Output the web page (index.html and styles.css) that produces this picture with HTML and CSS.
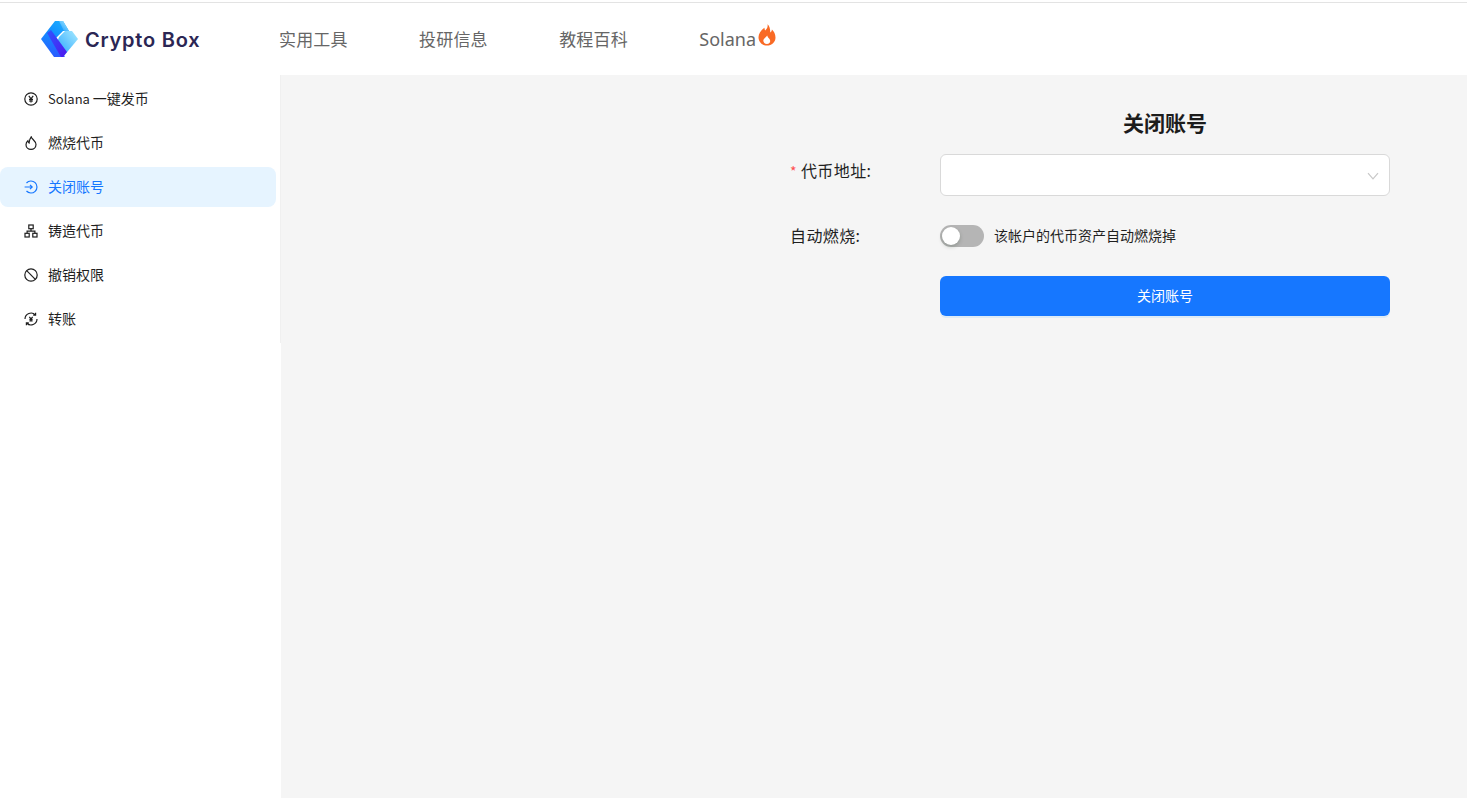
FILE: index.html
```html
<!DOCTYPE html>
<html lang="zh-CN">
<head>
<meta charset="utf-8">
<title>Crypto Box</title>
<link rel="stylesheet" href="styles.css">
</head>
<body>
<header class="topbar">
  <a class="brand">
    <svg class="brand-logo" viewBox="0 0 38 38" width="38" height="38">
      <defs>
        <linearGradient id="lgA" x1="0" y1="1" x2="1" y2="0"><stop offset="0" stop-color="#0a78ff"/><stop offset="1" stop-color="#1fb4ff"/></linearGradient>
        <linearGradient id="lgB" x1="0" y1="0" x2="1" y2="1"><stop offset="0" stop-color="#2f55ff"/><stop offset="1" stop-color="#4f16ee"/></linearGradient>
        <linearGradient id="lgC" x1="0" y1="1" x2="1" y2="0"><stop offset="0" stop-color="#1a9dff"/><stop offset="1" stop-color="#a6eaff"/></linearGradient>
        <linearGradient id="lgD" x1="0" y1="0" x2="0" y2="1"><stop offset="0" stop-color="#1689ff"/><stop offset="1" stop-color="#2a5cff"/></linearGradient>
      </defs>
      <path d="M0 19 14 1H22L28 11 22 11 12 21 6 14Z" fill="url(#lgA)"/>
      <path d="M18 1H22L28 11H23Z" fill="url(#lgC)"/>
      <path d="M18 17 24 11H31L37 19 22 37 14 28Z" fill="url(#lgC)"/>
      <path d="M0 19 6 13 24 37H13Z" fill="url(#lgD)"/>
      <path d="M6 13 10 10 26 32 22 37H20Z" fill="url(#lgB)"/>
    </svg>
    <span class="brand-name">Crypto Box</span>
  </a>
  <nav class="topnav">
    <a class="topnav-item">实用工具</a>
    <a class="topnav-item">投研信息</a>
    <a class="topnav-item">教程百科</a>
    <a class="topnav-item topnav-solana">Solana<svg class="fire" viewBox="0 0 18 22" width="18" height="22"><path d="M9.500 0.300c0.700 3.200-1 4.700-2.300 6.300-0.500-1-0.700-1.800-0.800-2.900C3 6.300 0.500 9.600 0.500 13.200c0 4.700 3.700 8.400 8.500 8.400s8.500-3.600 8.500-8.200c0-3.700-1.700-6.200-3.600-8-0.100 1.300-0.600 2.300-1.600 3.100C12.200 5.200 11.700 2.200 9.500 0.300zM9.200 11.500c0.300 1.700 1.400 2.400 2.300 3.500 0.800 1 1 2.700 0.100 3.800-0.700 0.800-1.600 1.200-2.700 1.200-2.100 0-3.600-1.500-3.600-3.400 0-2 2.900-3.300 3.900-5.100z" fill="#f96a25"/></svg></a>
  </nav>
</header>
<div class="layout">
  <aside class="sidebar">
    <ul class="menu">
      <li class="menu-item">
        <svg class="menu-icon" viewBox="0 0 14 14"><circle cx="7" cy="7" r="6.200"/><path d="M4.800 3.800 7 6.800l2.200-3M7 6.800v3.600M5 7.400h4M5 9h4"/></svg>
        <span><span class="menu-latin">Solana </span>一键发币</span>
      </li>
      <li class="menu-item">
        <svg class="menu-icon" viewBox="0 0 14 14"><path d="M7.200 0.900c0.500 2.200 4.800 3.900 4.800 7.700 0 2.800-2.200 4.800-5 4.800s-5-2-5-4.700c0-1.700 0.800-3.100 1.900-4 0.100 1 0.500 1.700 1.200 2.200C5.300 4.700 6 2.500 7.200 0.900z"/></svg>
        <span>燃烧代币</span>
      </li>
      <li class="menu-item is-active">
        <svg class="menu-icon" viewBox="0 0 14 14"><path d="M2.500 3A6 6 0 1 1 2.500 11M0.600 7h7.600M6 4.800 8.200 7 6 9.200"/></svg>
        <span>关闭账号</span>
      </li>
      <li class="menu-item">
        <svg class="menu-icon" viewBox="0 0 14 14"><rect x="4.800" y="1" width="4.400" height="3.700"/><rect x="1" y="9.300" width="4.200" height="3.700"/><rect x="8.800" y="9.300" width="4.200" height="3.700"/><path d="M7 4.700v2.400M3.100 9.300V7.100h7.800v2.200"/></svg>
        <span>铸造代币</span>
      </li>
      <li class="menu-item">
        <svg class="menu-icon" viewBox="0 0 14 14"><circle cx="7" cy="7" r="6.200"/><path d="M2.700 2.700l8.600 8.600"/></svg>
        <span>撤销权限</span>
      </li>
      <li class="menu-item">
        <svg class="menu-icon" viewBox="0 0 14 14"><path d="M1 7a6 6 0 0 1 10.400-4M13 7a6 6 0 0 1-10.400 4M11.600 0.800v2.400H9.200M2.400 13.200v-2.400h2.400M5.300 4.800 7 6.800l1.700-2M7 6.800v2.700M5.400 7.400h3.200M5.400 8.800h3.200"/></svg>
        <span>转账</span>
      </li>
    </ul>
  </aside>
  <main class="content">
    <form class="panel">
      <h1 class="panel-title">关闭账号</h1>
      <div class="row row-address">
        <label class="row-label"><span class="required">*</span>代币地址:</label>
        <div class="select">
          <svg class="select-arrow" viewBox="0 0 12 8" width="12" height="8"><path d="M1 1.200 6 6.800l5-5.600"/></svg>
        </div>
      </div>
      <div class="row row-switch">
        <label class="row-label">自动燃烧:</label>
        <div class="switch-wrap">
          <span class="switch"><span class="switch-knob"></span></span>
          <span class="switch-text">该帐户的代币资产自动燃烧掉</span>
        </div>
      </div>
      <div class="row">
        <span class="row-label"></span>
        <button type="button" class="submit">关闭账号</button>
      </div>
    </form>
  </main>
</div>
</body>
</html>
```
FILE: styles.css
```css
* { box-sizing: border-box; }
html, body { height: 100%; }
body {
  margin: 0;
  height: 798px;
  overflow: hidden;
  background: #fff;
  font-family: "Noto Sans CJK SC", "Noto Sans", sans-serif;
  color: #1f1f1f;
  display: flex;
  flex-direction: column;
}
.topbar {
  flex: none;
  border-top: 1px solid #e3e3e3;
  margin-top: 2px;
  height: 73px;
  display: flex;
  align-items: center;
  padding-left: 41px;
  background: #fff;
}
.brand { display: flex; align-items: center; width: 238px; }
.brand-logo { flex: none; }
.brand-name {
  margin-left: 6px;
  margin-top: 2px;
  font-family: "Inter", sans-serif;
  font-weight: 600;
  font-size: 20px;
  letter-spacing: 0.78px;
  color: #2b2654;
  white-space: nowrap;
}
.topnav { display: flex; gap: 71.500px; }
.topnav-item {
  font-size: 17px;
  letter-spacing: 0.15px;
  line-height: 24px;
  color: #666;
  white-space: nowrap;
}
.topnav-solana { display: flex; align-items: flex-start; font-family: "Noto Sans", sans-serif; font-size: 18px; letter-spacing: 0; }
.fire { margin-left: 1.500px; margin-top: -3px; }
.layout { flex: 1; display: flex; min-height: 0; }
.sidebar { width: 281px; flex: none; background: #fff; }
.menu {
  list-style: none;
  margin: 0;
  padding: 4px 4px 4px 0;
  display: flex;
  flex-direction: column;
  gap: 4px;
  height: 268px;
  border-right: 1px solid #f0f0f0;
}
.menu-item {
  height: 40px;
  display: flex;
  align-items: center;
  gap: 10px;
  padding-left: 24px;
  font-size: 14px;
  border-radius: 8px;
  color: #1f1f1f;
  white-space: nowrap;
}
.menu-item > span { margin-top: -2px; }
.menu-latin { font-size: 13px; }
.menu-icon {
  width: 14px;
  height: 14px;
  fill: none;
  stroke: currentColor;
  stroke-width: 1.200;
  flex: none;
}
.is-active { background: #e6f4ff; color: #1677ff; }
.content { flex: 1; background: #f5f5f5; display: flex; justify-content: flex-end; }
.panel { width: 600px; margin-right: 77px; padding-top: 32px; }
.panel-title {
  margin: 0 0 17px 150px;
  text-align: center;
  font-size: 21px;
  line-height: 30px;
  font-weight: 700;
  color: #1c1c1c;
}
.row { display: flex; align-items: center; }
.row-label { width: 150px; flex: none; font-size: 16px; letter-spacing: 0.4px; line-height: 24px; color: #1f1f1f; white-space: nowrap; margin-top: -2px; }
.required { color: #ff4d4f; font-size: 14px; margin-right: 4px; }
.row-address { align-items: flex-start; margin-bottom: 29px; }
.row-address .row-label { padding-top: 6px; }
.select {
  width: 450px;
  height: 42px;
  background: #fff;
  border: 1px solid #d9d9d9;
  border-radius: 6px;
  display: flex;
  align-items: center;
  justify-content: flex-end;
  padding-right: 10px;
}
.select-arrow { fill: none; stroke: #c8c8c8; stroke-width: 1.200; margin-top: 2px; }
.row-switch { margin-bottom: 29px; height: 22px; }
.switch-wrap { display: flex; align-items: center; gap: 10px; }
.switch {
  width: 44px;
  height: 22px;
  border-radius: 11px;
  background: #b5b5b5;
  padding: 2px;
  display: block;
}
.switch-knob {
  display: block;
  width: 18px;
  height: 18px;
  border-radius: 50%;
  background: #fff;
  box-shadow: 0 2px 4px rgba(0, 35, 11, 0.2);
}
.switch-text { font-size: 14px; line-height: 22px; color: #1f1f1f; margin-top: -2px; }
.submit {
  width: 450px;
  height: 40px;
  border: 0;
  border-radius: 6px;
  background: #1677ff;
  color: #fff;
  font: inherit;
  font-size: 14px;
  padding: 0 0 2px;
  box-shadow: 0 2px 0 rgba(5, 145, 255, 0.1);
}
```
